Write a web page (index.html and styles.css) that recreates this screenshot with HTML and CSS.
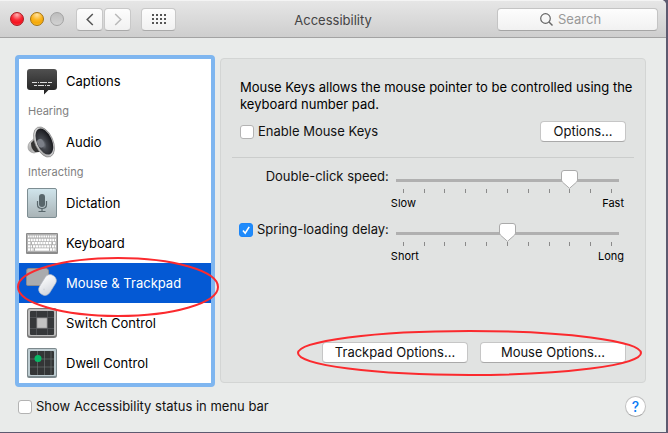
FILE: index.html
```
<!DOCTYPE html>
<html lang="en">

<head>
    <meta charset="UTF-8">
    <meta name="viewport" content="width=device-width, initial-scale=1.0">
    <title>Accessibility</title>
    <link rel="stylesheet" href="styles.css">
</head>

<body>
    <div class="window">
        <header class="toolbar">
            <div class="toolbar-left">
                <div class="lights">
                    <button class="light close" aria-label="Close"></button>
                    <button class="light minimize" aria-label="Minimize"></button>
                    <button class="light zoom" aria-label="Zoom" disabled></button>
                </div>
                <div class="nav">
                    <button class="tool" aria-label="Back">
                        <svg width="8" height="13" viewBox="0 0 8 13"><path d="M6.8 1 L1.2 6.5 L6.8 12" fill="none" stroke="#555" stroke-width="1.5"/></svg>
                    </button>
                    <button class="tool" aria-label="Forward" disabled>
                        <svg width="8" height="13" viewBox="0 0 8 13"><path d="M1.2 1 L6.8 6.5 L1.2 12" fill="none" stroke="#b9b9b9" stroke-width="1.5"/></svg>
                    </button>
                </div>
                <button class="tool wide" aria-label="Show All">
                    <svg width="14" height="10" viewBox="0 0 14 10"><path d="M0 1H14M0 5H14M0 9H14" stroke="#555" stroke-width="2" stroke-dasharray="2 2"/></svg>
                </button>
            </div>
            <h1>Accessibility</h1>
            <label class="search">
                <svg width="13" height="13" viewBox="0 0 13 13"><circle cx="5.5" cy="5.5" r="4.8" fill="none" stroke="#666" stroke-width="1.2"/><path d="M9 9 L12.5 12.5" stroke="#666" stroke-width="1.4"/></svg>
                <input type="search" placeholder="Search" aria-label="Search">
            </label>
        </header>

        <main class="content">
            <nav class="sidebar">
                <a href="#captions" class="item">
                    <svg width="32" height="32" viewBox="0 0 32 32">
                        <defs><linearGradient id="dark" x2="0" y2="1"><stop stop-color="#505050"/><stop offset="1" stop-color="#202020"/></linearGradient></defs>
                        <path d="M4 4H28Q31 4 31 7V22Q31 25 28 25H22.500L18 29.500V25H4Q1 25 1 22V7Q1 4 4 4Z" fill="url(#dark)"/>
                        <path d="M6 17.500H11M12 17.500H13M14 17.500H21M22 17.500H26M8 20.500H11M12 20.500H18M19 20.500H20M21 20.500H24" stroke="#ddd" stroke-width="1"/>
                    </svg>
                    Captions
                </a>
                <h2>Hearing</h2>
                <a href="#audio" class="item">
                    <svg width="32" height="32" viewBox="0 0 32 32">
                        <defs>
                            <linearGradient id="rim" x2="1" y2="1"><stop stop-color="#eee"/><stop offset=".5" stop-color="#aaa"/><stop offset="1" stop-color="#e4e4e8"/></linearGradient>
                            <radialGradient id="cone" cx=".35" cy=".55" r=".6"><stop stop-color="#888d95"/><stop offset=".35" stop-color="#44474d"/><stop offset="1" stop-color="#1b1c20"/></radialGradient>
                        </defs>
                        <path d="M4 16 L10 11 L15 25 L8 27 Q2 26 2 21 Q2 18 4 16Z" fill="url(#rim)" stroke="#888" stroke-width=".6"/>
                        <path d="M5 17Q5 23 9 26L14 26L9 13Z" fill="#333"/>
                        <ellipse cx="18" cy="16" rx="9" ry="16" transform="rotate(-24 18 16)" fill="url(#rim)" stroke="#777" stroke-width=".6"/>
                        <ellipse cx="18.500" cy="15.800" rx="7.500" ry="13.800" transform="rotate(-24 18 16)" fill="url(#cone)"/>
                        <ellipse cx="14.500" cy="17.500" rx="3.200" ry="4.500" transform="rotate(-24 14 17)" fill="#7c8088"/>
                    </svg>
                    Audio
                </a>
                <h2>Interacting</h2>
                <a href="#dictation" class="item">
                    <svg width="32" height="32" viewBox="0 0 32 32">
                        <defs><linearGradient id="sky" x2="0" y2="1"><stop stop-color="#d0e5ec"/><stop offset="1" stop-color="#a9b3b6"/></linearGradient></defs>
                        <rect x="1.500" y="1.500" width="29" height="29" rx="1.500" fill="url(#sky)" stroke="#7d8d92"/>
                        <rect x="13" y="7" width="6" height="13" rx="3" fill="#58666b"/>
                        <path d="M11.500 14V17.500Q11.500 21.500 16 21.500Q20.500 21.500 20.500 17.500V14M16 22V24.500M12.500 24.500H19.500" fill="none" stroke="#58666b" stroke-width="1.200"/>
                    </svg>
                    Dictation
                </a>
                <a href="#keyboard" class="item">
                    <svg width="32" height="32" viewBox="0 0 32 32">
                        <rect x="0" y="6" width="32" height="21" rx="1" fill="#8b8b8b"/>
                        <rect x="1" y="7" width="30" height="18" fill="#b1b1b1"/>
                        <path d="M2 9.500H30" stroke="#fff" stroke-width="2" stroke-dasharray="1.500 .7"/>
                        <path d="M2 13H30M2 22.500H8M24 22.500H30" stroke="#fff" stroke-width="2.400" stroke-dasharray="2 .7"/>
                        <path d="M2 16.200H5M6 16.200H26M27 16.200H30M2 19.400H6M7 19.400H25M26 19.400H30" stroke="#fff" stroke-width="2.300" stroke-dasharray="2.200 .6"/>
                        <path d="M9 22.500H23" stroke="#fff" stroke-width="2.400"/>
                    </svg>
                    Keyboard
                </a>
                <a href="#mouse" class="item selected" aria-current="page">
                    <svg width="32" height="32" viewBox="0 0 32 32">
                        <defs><linearGradient id="mouse" x2="1" y2="1"><stop stop-color="#fff"/><stop offset="1" stop-color="#cfd3da"/></linearGradient></defs>
                        <path d="M2.500 1.500H20Q22 1.500 22.500 3.500L23 16.500Q23 18.500 21 18.500H2Q0 18.500 .3 16.500L.8 3Q1 1.500 2.500 1.500Z" fill="#aaabad" stroke="#8a8b8f"/>
                        <rect x="15.500" y="7" width="12" height="22" rx="5.500" transform="rotate(32 21.500 18)" fill="url(#mouse)" stroke="#b5bac4" stroke-width=".6"/>
                        <circle cx="18" cy="22.500" r="1" fill="#d5d8de"/>
                    </svg>
                    Mouse &amp; Trackpad
                    <svg class="ring" viewBox="0 0 202 60" preserveAspectRatio="none"><ellipse cx="101" cy="30" rx="100" ry="29"/></svg>
                </a>
                <a href="#switch" class="item">
                    <svg width="32" height="32" viewBox="0 0 32 32">
                        <rect x="1" y="1" width="30" height="30" rx="3" fill="#777"/>
                        <rect x="2" y="2" width="28" height="27" rx="2" fill="#bcbcbc"/>
                        <rect x="4" y="4" width="24" height="24" rx="1" fill="#36383a"/>
                        <path d="M10.500 4V28M21.500 4V28M4 10.500H28M4 21.500H28" stroke="#55585a" stroke-width=".8"/>
                        <rect x="11" y="11" width="10" height="10" fill="#c3c3c3" stroke="#8c8c8c" stroke-width=".6"/>
                    </svg>
                    Switch Control
                </a>
                <a href="#dwell" class="item">
                    <svg width="32" height="32" viewBox="0 0 32 32">
                        <rect x="1" y="1" width="30" height="30" rx="2" fill="#7d898d"/>
                        <rect x="2" y="2" width="28" height="27" rx="1" fill="#bccbd0"/>
                        <rect x="4" y="4" width="24" height="24" rx="1" fill="#333536"/>
                        <path d="M11.500 4V28M18.500 4V28M25 4V28M4 12H28M4 20H28" stroke="#747879" stroke-width=".6"/>
                        <circle cx="12" cy="11.500" r="3.500" fill="#08b765"/>
                    </svg>
                    Dwell Control
                </a>
            </nav>

            <section class="panel">
                <div class="mouse-keys">
                    <p>Mouse Keys allows the mouse pointer to be controlled using the keyboard number pad.</p>
                    <div class="row">
                        <label class="check"><input type="checkbox"> Enable Mouse Keys</label>
                        <button class="push">Options...</button>
                    </div>
                </div>
                <hr>
                <div class="sliders">
                    <label class="slider-label" for="speed">Double-click speed:</label>
                    <div class="slider">
                        <input type="range" id="speed" min="0" max="10" value="8">
                        <div class="ticks"><i></i><i></i><i></i><i></i><i></i><i></i><i></i><i></i><i></i><i></i><i></i></div>
                        <div class="ends"><span>Slow</span><span>Fast</span></div>
                    </div>
                    <label class="slider-label check"><input type="checkbox" checked> Spring-loading delay:</label>
                    <div class="slider">
                        <input type="range" min="0" max="10" value="5" aria-label="Spring-loading delay">
                        <div class="ticks"><i></i><i></i><i></i><i></i><i></i><i></i><i></i><i></i><i></i><i></i><i></i></div>
                        <div class="ends"><span>Short</span><span>Long</span></div>
                    </div>
                </div>
                <div class="buttons">
                    <button class="push large">Trackpad Options...</button>
                    <button class="push large">Mouse Options...</button>
                    <svg class="ring" viewBox="0 0 344 46" preserveAspectRatio="none"><ellipse cx="172" cy="23" rx="171" ry="22"/></svg>
                </div>
            </section>
        </main>

        <footer class="footer">
            <label class="check"><input type="checkbox"> Show Accessibility status in menu bar</label>
            <button class="help" aria-label="Help">?</button>
        </footer>
    </div>
</body>

</html>
```
FILE: styles.css
```
* {
    box-sizing: border-box;
}

body {
    margin: 0;
    min-height: 100vh;
    display: flex;
    padding: 0 2px 1px 0;
    background: #5d5a70;
    color: #111;
    font-family: Inter, Roboto, sans-serif;
    font-size: 13px;
    line-height: 17px;
}

button,
input {
    font: inherit;
    color: inherit;
    margin: 0;
}

svg {
    flex: none;
    display: block;
}

.window {
    flex: 1;
    background: #e9ebea;
    border-radius: 0 5px 0 0;
    overflow: hidden;
}

/* Toolbar */
.toolbar {
    display: grid;
    grid-template-columns: 1fr auto 1fr;
    align-items: center;
    height: 38px;
    padding: 0 8px;
    background: linear-gradient(#e6e6e6, #cecece);
    border-top: 1px solid #f4f4f4;
    border-bottom: 1px solid #a3a3a3;
}

.toolbar-left,
.lights,
.nav {
    display: flex;
    align-items: center;
}

.toolbar-left {
    gap: 10px;
}

.lights {
    gap: 6px;
    padding: 0 2px;
}

.light {
    width: 14px;
    height: 14px;
    padding: 0;
    border: 1px solid;
    border-radius: 50%;
}

.close {
    background: radial-gradient(circle at 50% 15%, #ffb3b3, #fa2a35 45%, #f5121f 70%, #ff5a60);
    border-color: #a81a22;
}

.minimize {
    background: radial-gradient(circle at 50% 15%, #ffe2a0, #fbb520 45%, #f5a806 70%, #ffd04d);
    border-color: #a5730f;
}

.zoom {
    background: linear-gradient(#bdbdbd, #d2d2d2);
    border-color: #a2a2a2;
}

.nav {
    gap: 1px;
}

.tool {
    display: flex;
    align-items: center;
    justify-content: center;
    width: 27px;
    height: 23px;
    padding: 0;
    background: linear-gradient(#fdfdfd, #f1f1f1);
    border: 1px solid #c8c8c8;
    border-bottom-color: #aaa;
    border-radius: 4px;
}

.wide {
    width: 35px;
}

h1 {
    margin: 2px 0 0;
    font-size: 13px;
    font-weight: 400;
    color: #444;
}

.search {
    justify-self: end;
    display: flex;
    align-items: center;
    gap: 5px;
    width: 161px;
    height: 23px;
    padding-left: 42px;
    background: linear-gradient(#fdfdfd, #f1f1f1);
    border: 1px solid #c4c4c4;
    border-bottom-color: #a5a5a5;
    border-radius: 4px;
}

.search input {
    width: 100%;
    padding: 0;
    border: 0;
    outline: 0;
    background: none;
}

.search input::placeholder {
    color: #999;
}

/* Content */
.content {
    display: flex;
    gap: 5px;
    padding: 17px 20px 0 15px;
}

.sidebar {
    flex: none;
    width: 200px;
    padding: 2px 0 0;
    background: #fff;
    border: 4px solid #7fb6f0;
    border-radius: 4px;
}

.item {
    position: relative;
    display: flex;
    align-items: center;
    gap: 8px;
    height: 40px;
    padding-left: 7px;
    color: #000;
    text-decoration: none;
}

.selected {
    background: #0459d4;
    color: #fff;
}

h2 {
    margin: 0;
    padding-left: 9px;
    font-size: 11px;
    font-weight: 400;
    line-height: 21px;
    color: #808080;
}

.ring {
    position: absolute;
    z-index: 1;
    overflow: visible;
    pointer-events: none;
    fill: none;
    stroke: #fb2a2e;
    stroke-width: 2px;
}

.item .ring {
    left: -2px;
    top: -6px;
    width: 202px;
    height: 60px;
}

.buttons .ring {
    left: -25px;
    top: -12px;
    width: calc(100% + 41px);
    height: 46px;
}

.panel {
    flex: 1;
    display: flex;
    flex-direction: column;
    margin: 3px 0 4px;
    padding: 20px 11px 19px;
    background: #e1e3e2;
    border: 1px solid #d3d5d4;
    border-radius: 4px;
}

.mouse-keys {
    padding-left: 8px;
}

p {
    margin: 0 -5px 8px 0;
    color: #000;
}

.row {
    display: flex;
    align-items: center;
    justify-content: space-between;
    padding-right: 8px;
}

.check {
    display: flex;
    align-items: center;
    gap: 4px;
}

.check input {
    appearance: none;
    flex: none;
    width: 14px;
    height: 14px;
    background: #fff;
    border: 1px solid #b3b3b3;
    border-radius: 3px;
}

.check input:checked {
    border-color: #1c86f8;
    background: #1f8bfb url("data:image/svg+xml,%3Csvg xmlns='http://www.w3.org/2000/svg' viewBox='0 0 12 12'%3E%3Cpath d='M3 6.500 L5.200 9.200 L9.200 2.800' fill='none' stroke='white' stroke-width='1.600'/%3E%3C/svg%3E");
}

.push {
    width: 86px;
    height: 21px;
    padding: 0;
    background: #fff;
    border: 1px solid #c6c6c6;
    border-bottom-color: #a9a9a9;
    border-radius: 4px;
    color: #111;
}

.large {
    width: 146px;
}

hr {
    margin: 15px 0 10px;
    border: 0;
    border-top: 1px solid #cbcdcc;
}

.sliders {
    display: grid;
    grid-template-columns: auto 1fr;
    column-gap: 7px;
    row-gap: 10px;
    padding: 0 15px 0 7px;
}

.slider-label {
    justify-self: end;
    align-self: start;
}

.slider input {
    appearance: none;
    display: block;
    width: 100%;
    height: 20px;
    background: linear-gradient(#b0b0b0, #b0b0b0) center 11px / 100% 3px no-repeat;
}

.slider input::-webkit-slider-thumb {
    appearance: none;
    width: 17px;
    height: 19px;
    margin-top: 3px;
    background: url("data:image/svg+xml,%3Csvg xmlns='http://www.w3.org/2000/svg' width='17' height='19'%3E%3Cpath d='M3 .5H14Q16.500 .5 16.500 3V10Q16.500 11 15.500 12.200L8.500 18.300L1.500 12.200Q.5 11 .5 10V3Q.5 .5 3 .5Z' fill='white' stroke='%23aaa'/%3E%3C/svg%3E");
}

.ticks {
    display: flex;
    justify-content: space-between;
    padding: 1px 7px 0;
}

.ticks i {
    width: 1px;
    height: 4px;
    background: #8a8a8a;
}

.ends {
    display: flex;
    justify-content: space-between;
    margin: 3px -5px 0;
    font-size: 11px;
    line-height: 15px;
    color: #000;
}

.buttons {
    position: relative;
    display: flex;
    gap: 12px;
    align-self: flex-end;
    margin: auto 8px 0 0;
}

/* Footer */
.footer {
    display: flex;
    align-items: center;
    justify-content: space-between;
    padding: 9px 20px 15px 18px;
}

.help {
    width: 21px;
    height: 21px;
    padding: 0;
    background: #fff;
    border: 1px solid #c0c0c0;
    border-bottom-color: #a5a5a5;
    border-radius: 50%;
    color: #0a7cf5;
    font-size: 14px;
    font-weight: 500;
}
```
